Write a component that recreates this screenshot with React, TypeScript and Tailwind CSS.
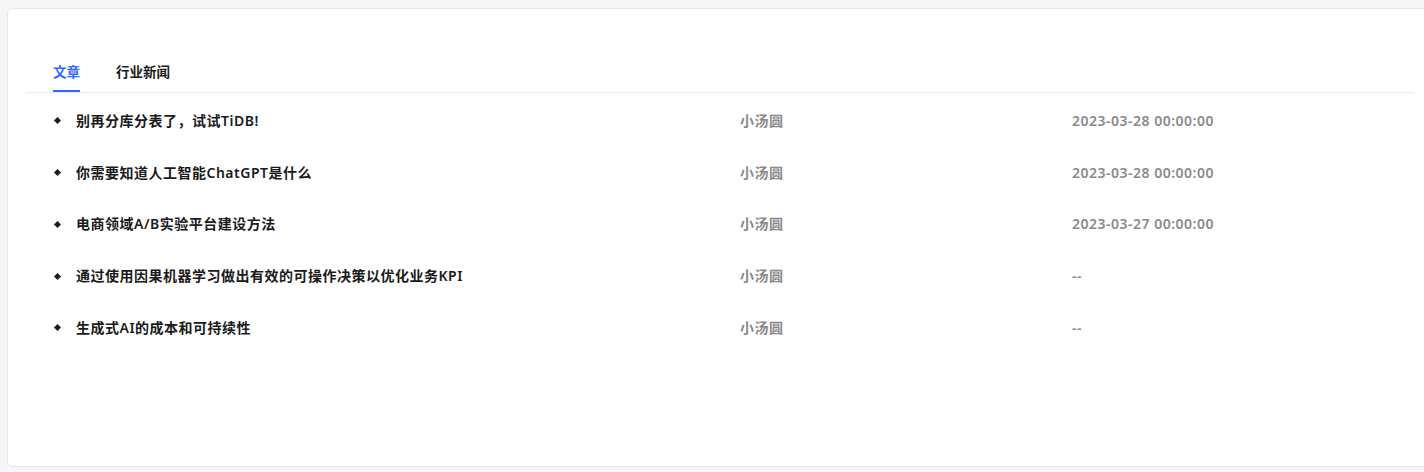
const articles = [
  { title: '别再分库分表了，试试TiDB!', author: '小汤圆', time: '2023-03-28 00:00:00' },
  { title: '你需要知道人工智能ChatGPT是什么', author: '小汤圆', time: '2023-03-28 00:00:00' },
  { title: '电商领域A/B实验平台建设方法', author: '小汤圆', time: '2023-03-27 00:00:00' },
  { title: '通过使用因果机器学习做出有效的可操作决策以优化业务KPI', author: '小汤圆', time: '' },
  { title: '生成式AI的成本和可持续性', author: '小汤圆', time: '' },
];

const font = { fontFamily: '"Noto Sans", "Noto Sans CJK SC", sans-serif' };

export default function App() {
  return (
    <div className="h-[472px] w-full overflow-hidden bg-[#f5f6f8] pl-[7px] pt-[8px]" style={font}>
      <div className="h-[459px] w-[1426px] rounded-[5px] border border-[#e3e6ec] bg-white px-[18px] pt-[53px]">
        {/* tabs */}
        <div className="flex gap-[36px] border-b border-[#e6e8ee] pl-[27px]">
          <button className="border-b-2 border-[#2f6bff] pb-[8px] text-[13.5px] font-semibold leading-[20px] text-[#2f6bff]">
            文章
          </button>
          <button className="border-b-2 border-transparent pb-[8px] text-[13.5px] font-semibold leading-[20px] text-[#1a1a1a]">
            行业新闻
          </button>
        </div>

        <ul className="pt-[2px]">
          {articles.map((a) => (
            <li key={a.title} className="flex h-[51.75px] items-center">
              <span className="ml-[29px] mr-[16px] h-[5px] w-[5px] rotate-45 bg-[#1a1a2e]" />
              <div className="grid flex-1 grid-cols-[664px_332px_1fr] text-[14px] font-semibold leading-[20px] tracking-[0.5px]">
                <span className="text-[#1a1a1a]">{a.title}</span>
                <span className="text-[#8a8a8a]">{a.author}</span>
                <span className="text-[#8a8a8a]">{a.time || '--'}</span>
              </div>
            </li>
          ))}
        </ul>
      </div>
    </div>
  );
}
